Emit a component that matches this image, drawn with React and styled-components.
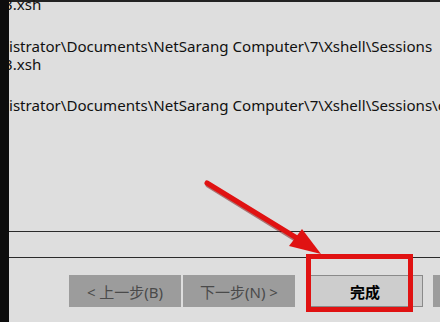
import React from "react";
import styled, { createGlobalStyle } from "styled-components";

const Global = createGlobalStyle`
  html, body { margin: 0; padding: 0; background: #dedede; }
  #root { width: 440px; height: 322px; overflow: hidden; }
`;

const Screen = styled.div`
  position: relative;
  display: flex;
  width: 440px;
  height: 322px;
  overflow: hidden;
  background: #dedede;
`;

const Edge = styled.div`
  width: 9px;
  flex: none;
  background: #0d0d0d;
`;

const Dialog = styled.div`
  flex: 1;
  display: flex;
  flex-direction: column;
  border-top: 2px solid #222;
  min-width: 0;
`;

const Log = styled.div`
  position: relative;
  z-index: 1;
  margin-top: -7px;
  height: 236px;
  overflow: hidden;
  font-family: "Noto Sans", "Open Sans", sans-serif;
  font-size: 15.1px;
  line-height: 19px;
  color: #111;
  white-space: nowrap;
`;

const Line = styled.div`
  height: ${(p) => p.h || 19}px;
  margin-left: ${(p) => p.shift || 0}px;
`;

const Rule = styled.div`
  height: 1px;
  background: #2a2a2a;
`;

const Gap = styled.div`
  height: 25px;
`;

const Buttons = styled.div`
  display: flex;
  gap: 2px;
  padding: 17px 0 0 60px;
`;

const Button = styled.div`
  flex: none;
  width: ${(p) => p.w || 112}px;
  height: 32px;
  box-sizing: border-box;
  margin-left: ${(p) => p.ml || 0}px;
  display: flex;
  align-items: center;
  justify-content: center;
  font-family: "Noto Sans", "Noto Sans CJK SC", sans-serif;
  font-size: 15px;
  color: ${(p) => (p.primary ? "#000" : "#4a4a4a")};
  font-weight: ${(p) => (p.primary ? 600 : 400)};
  background: ${(p) => (p.primary ? "#cdcdcd" : "#9c9c9c")};
  border: 1px solid ${(p) => (p.primary ? "#8a8a8a" : "#9c9c9c")};
`;

const Annotation = styled.svg`
  position: absolute;
  left: 0;
  top: 0;
  z-index: 2;
  pointer-events: none;
`;

export default function App() {
  return (
    <>
      <Global />
      <Screen>
        <Edge />
        <Dialog>
          <Log>
            <Line shift={-5}>3.xsh</Line>
            <Line h={23} />
            <Line h={18}>istrator\Documents\NetSarang Computer\7\Xshell\Sessions</Line>
            <Line shift={-5}>3.xsh</Line>
            <Line h={22} />
            <Line>istrator\Documents\NetSarang Computer\7\Xshell\Sessions\c</Line>
          </Log>
          <Rule />
          <Gap />
          <Rule />
          <Buttons>
            <Button>&lt; 上一步(B)</Button>
            <Button>下一步(N) &gt;</Button>
            <Button primary w={116} ml={10}>完成</Button>
            <Button ml={8}>取消</Button>
          </Buttons>
        </Dialog>
        <Annotation width="440" height="322" viewBox="0 0 440 322">
          <line x1="208" y1="185" x2="302" y2="243" stroke="#7a0a0a" strokeWidth="5" strokeLinecap="round" opacity="0.5" />
          <line x1="207" y1="183" x2="300" y2="240" stroke="#e01212" strokeWidth="5" strokeLinecap="round" />
          <polygon points="289,246 302,229 321,254" fill="#e01212" />
          <rect x="308.5" y="256.5" width="102" height="53" fill="none" stroke="#e01212" strokeWidth="5" />
        </Annotation>
      </Screen>
    </>
  );
}
